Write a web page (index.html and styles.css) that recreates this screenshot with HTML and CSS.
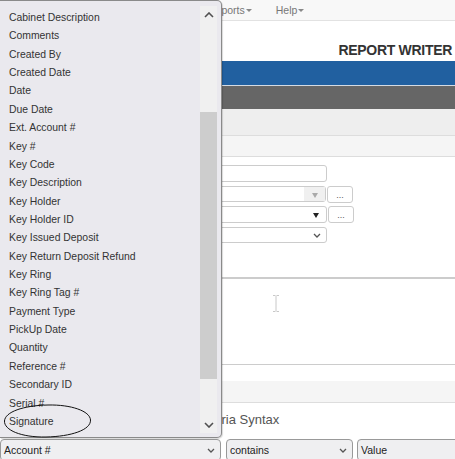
FILE: index.html
```html
<!DOCTYPE html>
<html>
<head>
<meta charset="utf-8">
<link rel="stylesheet" href="styles.css">
</head>
<body>
<div class="page">
  <nav class="menubar">
    <span class="menu">Reports<span class="caret"></span></span>
    <span class="menu">Help<span class="caret"></span></span>
  </nav>
  <header class="titlebar"><h1>REPORT WRITER</h1></header>
  <div class="bluebar"></div>
  <div class="graybar"></div>
  <div class="subbar1"></div>
  <div class="subbar2"></div>
  <section class="form">
    <div class="row"><div class="field input"></div></div>
    <div class="row short">
      <div class="field select disabled"><span class="arrowbox"><span class="tri gray"></span></span></div>
      <div class="btn">...</div>
    </div>
    <div class="row">
      <div class="field select"><span class="arrowbox"><span class="tri black"></span></span></div>
      <div class="btn">...</div>
    </div>
    <div class="row short">
      <div class="field select"><svg class="chev" width="8" height="5" viewBox="0 0 8 5"><polyline points="1,1 4,4 7,1" fill="none" stroke="#555" stroke-width="1.3"/></svg></div>
    </div>
  </section>
  <section class="editor">
    <svg class="ibeam" width="8" height="17" viewBox="0 0 8 17"><path d="M1 0.5h2.5M4.5 0.5h2.5M4 1v15M1 16.5h2.5M4.5 16.5h2.5" stroke="#c8c8c8" stroke-width="1" fill="none"/></svg>
  </section>
  <div class="criteria-head"></div>
  <h3 class="criteria-title">Criteria Syntax</h3>
  <div class="criteria-row">
    <div class="ctl sel w1">Account #<svg class="chev" width="8" height="5" viewBox="0 0 8 5"><polyline points="1,1 4,4 7,1" fill="none" stroke="#555" stroke-width="1.3"/></svg></div>
    <div class="ctl sel w2">contains<svg class="chev" width="8" height="5" viewBox="0 0 8 5"><polyline points="1,1 4,4 7,1" fill="none" stroke="#555" stroke-width="1.3"/></svg></div>
    <div class="ctl w3">Value</div>
  </div>
</div>

<div class="dropdown">
  <ul class="list">
    <li>Cabinet Description</li>
    <li>Comments</li>
    <li>Created By</li>
    <li>Created Date</li>
    <li>Date</li>
    <li>Due Date</li>
    <li>Ext. Account #</li>
    <li>Key #</li>
    <li>Key Code</li>
    <li>Key Description</li>
    <li>Key Holder</li>
    <li>Key Holder ID</li>
    <li>Key Issued Deposit</li>
    <li>Key Return Deposit Refund</li>
    <li>Key Ring</li>
    <li>Key Ring Tag #</li>
    <li>Payment Type</li>
    <li>PickUp Date</li>
    <li>Quantity</li>
    <li>Reference #</li>
    <li>Secondary ID</li>
    <li>Serial #</li>
    <li>Signature</li>
  </ul>
  <div class="scrollbar">
    <div class="sb-btn"><svg width="10" height="6" viewBox="0 0 10 6"><polyline points="1,5 5,1 9,5" fill="none" stroke="#505050" stroke-width="1.6"/></svg></div>
    <div class="sb-space1"></div>
    <div class="sb-thumb"></div>
    <div class="sb-space2"></div>
    <div class="sb-btn"><svg width="10" height="6" viewBox="0 0 10 6"><polyline points="1,1 5,5 9,1" fill="none" stroke="#505050" stroke-width="1.6"/></svg></div>
  </div>
</div>

<svg class="circle" width="92" height="36" viewBox="0 0 92 36"><path d="M47 2 C70 1.5 89 8 89.5 17 C90 27 70 33.5 45 34 C20 34.5 3 27 3.5 18 C4 9 22 2.5 47 2 Z" fill="none" stroke="#111" stroke-width="1"/></svg>
</body>
</html>
```
FILE: styles.css
```css
* { box-sizing: border-box; }
html, body { margin: 0; padding: 0; }
body {
  width: 455px;
  height: 459px;
  overflow: hidden;
  position: relative;
  font-family: "Liberation Sans", Arial, sans-serif;
  color: #333;
  background: #fff;
}
.page { width: 455px; }

.menubar {
  height: 21px;
  background: #f8f8f8;
  border-bottom: 1px solid #e2e2e2;
  display: flex;
  align-items: center;
  gap: 24px;
  padding-left: 208px;
  font-size: 10.5px;
  color: #777;
}
.menu { display: flex; align-items: center; }
.caret {
  width: 0; height: 0;
  margin-left: 1px;
  border-left: 3px solid transparent;
  border-right: 3px solid transparent;
  border-top: 3px solid #888;
}

.titlebar {
  height: 40px;
  display: flex;
  justify-content: flex-end;
  align-items: flex-end;
  padding: 0 3px 4px 0;
}
.titlebar h1 {
  margin: 0;
  font-size: 14px;
  line-height: 1;
  font-weight: bold;
  letter-spacing: -0.3px;
  color: #333;
}

.bluebar { height: 24px; background: #2160a0; }
.graybar { height: 24px; background: #666; border-top: 1px solid #d5dbe3; }
.subbar1 { height: 27px; background: #eee; border-bottom: 1px solid #ddd; }
.subbar2 { height: 21px; background: #f5f5f5; border-bottom: 1px solid #ddd; }

.form {
  height: 122px;
  padding-top: 8px;
  border-bottom: 2px solid #ccc;
  display: flex;
  flex-direction: column;
  gap: 4px;
}
.row { display: flex; padding-left: 120px; height: 17px; }
.row.short { height: 16px; }
.field {
  width: 207px;
  height: 100%;
  border: 1px solid #ccc;
  border-radius: 3px;
  background: #fff;
  position: relative;
  display: flex;
  justify-content: flex-end;
  align-items: center;
}
.short .field { width: 206px; }
.row:last-child .field { width: 207px; }
.arrowbox {
  width: 21px;
  height: 100%;
  display: flex;
  align-items: center;
  justify-content: center;
}
.disabled .arrowbox { background: #f0f0f0; }
.tri {
  width: 0; height: 0;
  border-left: 3.5px solid transparent;
  border-right: 3.5px solid transparent;
  border-top: 5px solid #222;
  margin-top: 2px;
}
.tri.gray { border-top-color: #aaa; }
.field .chev { margin-right: 5px; }
.btn {
  width: 26px;
  height: 17px;
  margin-left: 1px;
  border: 1px solid #ccc;
  border-radius: 3px;
  font-size: 9px;
  color: #555;
  display: flex;
  align-items: flex-end;
  justify-content: center;
  line-height: 1;
  padding-bottom: 2px;
}

.editor {
  height: 86px;
  border-bottom: 1px solid #ccc;
  position: relative;
}
.ibeam { position: absolute; left: 272px; top: 16px; }

.criteria-head {
  margin-top: 16px;
  height: 22px;
  background: #f5f5f5;
  border-bottom: 1px solid #ddd;
}
.criteria-title {
  margin: 0;
  height: 36px;
  line-height: 34px;
  padding-left: 194px;
  font-size: 13px;
  font-weight: normal;
  color: #555;
}
.criteria-row { display: flex; height: 22px; }
.ctl {
  height: 22px;
  border: 1px solid #999;
  border-radius: 4px;
  background: #efeff1;
  font-size: 10.5px;
  color: #222;
  display: flex;
  align-items: center;
  padding-left: 3px;
  flex-shrink: 0;
}
.sel { justify-content: space-between; padding-right: 5px; }
.w1 { width: 221px; }
.w2 { width: 127px; margin-left: 5px; }
.w3 { width: 110px; margin-left: 4px; }

.dropdown {
  position: absolute;
  left: 0;
  top: 0;
  width: 222px;
  height: 438px;
  background: #eae9ee;
  border: 1px solid #8a8a8a;
  border-left: none;
  border-radius: 0 5px 5px 0;
  box-shadow: 1px 1px 1px rgba(0,0,0,0.15);
  display: flex;
}
.list {
  flex: 1;
  margin: 0;
  list-style: none;
  padding: 8px 0 0 9px;
  font-size: 10.4px;
  line-height: 18.36px;
  color: #333;
  overflow: hidden;
}
.list li { height: 18.36px; white-space: nowrap; }
.scrollbar {
  width: 17px;
  height: 427px;
  margin: 5px 4px 0 0;
  background: #f0f0f0;
  display: flex;
  flex-direction: column;
}
.sb-btn { height: 17px; display: flex; align-items: center; justify-content: center; }
.sb-space1 { height: 89px; }
.sb-thumb { height: 267px; background: #cdcdcd; }
.sb-space2 { height: 37px; }

.circle { position: absolute; left: 1px; top: 403px; }
```
